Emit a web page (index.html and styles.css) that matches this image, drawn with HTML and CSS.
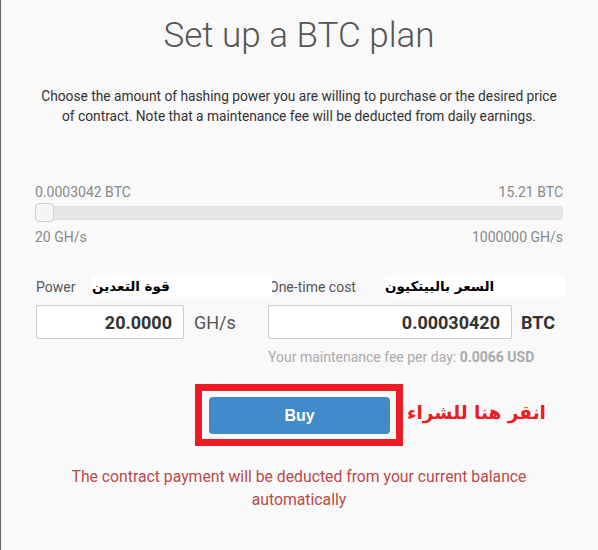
FILE: index.html
```html
<!DOCTYPE html>
<html lang="en">
<head>
<meta charset="utf-8">
<title>Set up a BTC plan</title>
<link rel="stylesheet" href="styles.css">
</head>
<body>
<div class="page">
  <h1 class="title">Set up a BTC plan</h1>
  <p class="desc">Choose the amount of hashing power you are willing to purchase or the desired price of contract. Note that a maintenance fee will be deducted from daily earnings.</p>

  <div class="slider">
    <div class="slider-labels">
      <span>0.0003042 BTC</span>
      <span>15.21 BTC</span>
    </div>
    <div class="track">
      <div class="handle"></div>
    </div>
    <div class="slider-labels slider-labels-bottom">
      <span>20 GH/s</span>
      <span>1000000 GH/s</span>
    </div>
  </div>

  <div class="form">
    <div class="field">
      <div class="label">Power</div>
      <div class="control-row">
        <input class="control control-power" type="text" value="20.0000" readonly>
        <span class="unit">GH/s</span>
      </div>
    </div>
    <div class="field">
      <div class="label">One-time cost</div>
      <div class="control-row">
        <input class="control control-cost" type="text" value="0.00030420" readonly>
        <span class="unit unit-bold">BTC</span>
      </div>
      <div class="fee">Your maintenance fee per day: <b>0.0066 USD</b></div>
    </div>
    <div class="note note-power" dir="rtl">قوة التعدين</div>
    <div class="note note-cost" dir="rtl">السعر بالبيتكيون</div>
  </div>

  <div class="buy-area">
    <div class="highlight">
      <button class="buy" type="button">Buy</button>
      <span class="click-note" dir="rtl">انقر هنا للشراء</span>
    </div>
  </div>

  <p class="warning">The contract payment will be deducted from your current balance automatically</p>
</div>
</body>
</html>
```

FILE: styles.css
```css
html, body {
  margin: 0;
  padding: 0;
}

body {
  font-family: Roboto, "Liberation Sans", Arial, sans-serif;
  background: #f9f9f9;
}

.page {
  box-sizing: border-box;
  width: 598px;
  height: 550px;
  border-left: 1px solid #666;
  background: #f9f9f9;
  padding: 16px 35px 0 34px;
  overflow: hidden;
}

.title {
  margin: 0;
  font-weight: 300;
  font-size: 35px;
  line-height: 40px;
  color: #555;
  text-align: center;
}

.desc {
  margin: 30px 0 0;
  font-size: 13.75px;
  line-height: 20px;
  color: #333;
  text-align: center;
}

.slider {
  margin-top: 56px;
}

.slider-labels {
  display: flex;
  justify-content: space-between;
  font-size: 14px;
  line-height: 20px;
  color: #888;
}

.slider-labels-bottom {
  margin-top: 7px;
}

.track {
  position: relative;
  box-sizing: border-box;
  margin-top: 4px;
  height: 14px;
  background: #e6e6e6;
  border: 1px solid #dcdcdc;
  border-radius: 4px;
}

.handle {
  position: absolute;
  left: -1px;
  top: -4px;
  box-sizing: border-box;
  width: 19px;
  height: 19px;
  background: #f5f5f5;
  border: 1px solid #cfcfcf;
  border-radius: 4px;
}

.form {
  position: relative;
  display: grid;
  grid-template-columns: 233px 1fr;
  margin-top: 30px;
}

.label {
  font-size: 14px;
  line-height: 20px;
  color: #555;
  padding-left: 1px;
}

.control-row {
  display: flex;
  align-items: center;
  margin-top: 8px;
}

.control {
  box-sizing: border-box;
  height: 34px;
  margin: 0;
  padding: 0 11px 0 6px;
  border: 1px solid #ccc;
  border-radius: 2px;
  background: #fff;
  font-family: Roboto, "Liberation Sans", Arial, sans-serif;
  font-size: 18px;
  font-weight: 700;
  color: #333;
  text-align: right;
  outline: none;
}

.control-power {
  width: 148px;
  margin-left: 1px;
}

.control-cost {
  width: 244px;
}

.unit {
  margin-left: 10px;
  font-size: 18px;
  color: #555;
}

.unit-bold {
  margin-left: 9px;
  font-weight: 700;
  color: #333;
}

.fee {
  margin-top: 8px;
  font-size: 14px;
  line-height: 20px;
  color: #aaa;
}

.fee b {
  font-weight: 700;
}

.note {
  position: absolute;
  top: -2px;
  box-sizing: border-box;
  width: 180px;
  height: 22px;
  background: #fff;
  font-family: "DejaVu Sans", "Liberation Sans", sans-serif;
  font-size: 13.5px;
  line-height: 22px;
  font-weight: 700;
  color: #000;
  text-align: left;
  white-space: nowrap;
}

.note-power {
  left: 57px;
}

.note-cost {
  left: 350px;
}

.buy-area {
  display: flex;
  justify-content: center;
  margin-top: 17px;
}

.highlight {
  position: relative;
  border: 7px solid #ed1c24;
  padding: 6px 6px 5px 7px;
}

.buy {
  display: block;
  width: 181px;
  height: 37px;
  margin: 0;
  padding: 0;
  border: none;
  border-radius: 4px;
  background: #428bca;
  color: #fff;
  font-family: "Liberation Sans", Arial, sans-serif;
  font-size: 16px;
  font-weight: 700;
}

.click-note {
  position: absolute;
  left: calc(100% + 11px);
  top: 7px;
  font-family: "DejaVu Sans", "Liberation Sans", sans-serif;
  font-size: 18.5px;
  font-weight: 700;
  line-height: 30px;
  color: #ed1c24;
  white-space: nowrap;
}

.warning {
  margin: 19px 0 0;
  font-size: 15.75px;
  line-height: 23px;
  color: #b94a48;
  text-align: center;
}
```
